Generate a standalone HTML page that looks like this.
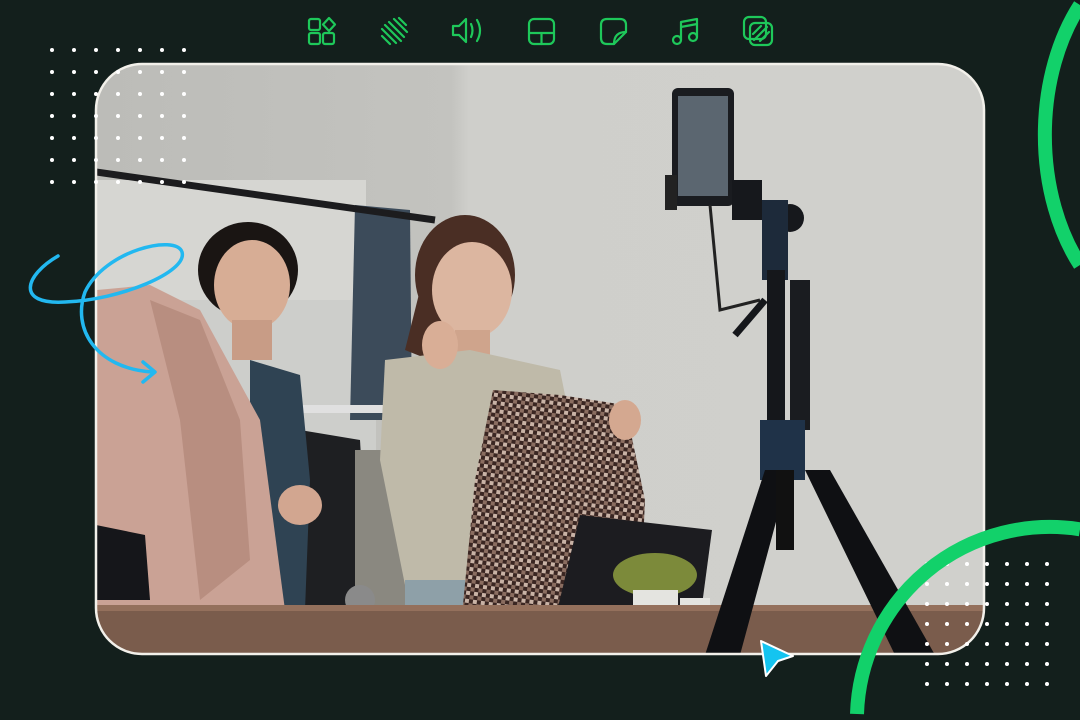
<!DOCTYPE html>
<html><head><meta charset="utf-8"><style>
html,body{margin:0;padding:0;background:#131f1c;width:1080px;height:720px;overflow:hidden}
svg{display:block;position:fixed;left:0;top:0;overflow:hidden}
</style></head><body>
<svg width="1080" height="720" viewBox="0 0 1080 720" overflow="hidden" xmlns="http://www.w3.org/2000/svg">
<defs>
<clipPath id="c"><rect x="96" y="64" width="888" height="590" rx="46"/></clipPath>
<pattern id="chk" width="8" height="8" patternUnits="userSpaceOnUse" patternTransform="rotate(8)">
<rect width="8" height="8" fill="#3a2622"/><rect width="4" height="4" fill="#c9b3a6"/><rect x="4" y="4" width="4" height="4" fill="#8a6d60"/></pattern>
<linearGradient id="wall" x1="0" x2="1"><stop offset="0" stop-color="#bcbcb8"/><stop offset="0.4" stop-color="#c3c3bf"/><stop offset="0.42" stop-color="#cfcfcb"/><stop offset="1" stop-color="#d0d0cc"/></linearGradient>
</defs>
<rect width="1080" height="720" fill="#131f1c"/>
<g clip-path="url(#c)">
<rect x="96" y="64" width="888" height="590" fill="url(#wall)"/>
<rect x="96" y="180" width="270" height="240" fill="#d6d6d2"/>
<rect x="96" y="300" width="280" height="150" fill="#cdcecb"/>
<polygon points="355,205 410,210 412,420 350,420" fill="#3c4b5a"/>
<line x1="96" y1="172" x2="435" y2="220" stroke="#1c1c1e" stroke-width="7"/>
<rect x="300" y="405" width="90" height="8" fill="#e0e0e0"/>
<polygon points="300,430 360,440 370,610 300,610" fill="#1e1f22"/>
<polygon points="355,450 410,450 410,610 355,610" fill="#8a8880"/>
<ellipse cx="248" cy="270" rx="50" ry="48" fill="#1a1513"/>
<ellipse cx="252" cy="285" rx="38" ry="45" fill="#d7ad95"/>
<rect x="232" y="320" width="40" height="40" fill="#c89c86"/>
<polygon points="250,360 300,375 310,480 305,610 250,610" fill="#2f4353"/>
<polygon points="97,290 150,285 200,310 260,420 285,610 97,610" fill="#caa295"/>
<polygon points="150,300 200,320 240,420 250,560 200,600 180,420" fill="#b88e80"/>
<ellipse cx="300" cy="505" rx="22" ry="20" fill="#d2a690"/>
<ellipse cx="465" cy="275" rx="50" ry="60" fill="#4a2e24"/>
<polygon points="420,290 440,300 430,360 405,350" fill="#4a2e24"/>
<ellipse cx="472" cy="290" rx="40" ry="48" fill="#dcb6a0"/>
<rect x="455" y="330" width="35" height="30" fill="#cfa48c"/>
<polygon points="385,360 470,350 560,370 570,420 560,610 410,610 380,460" fill="#bfbaa9"/>
<ellipse cx="440" cy="345" rx="18" ry="24" fill="#d9ae96"/>
<polygon points="405,580 465,580 465,615 405,615" fill="#8ea0a8"/>
<polygon points="493,390 560,395 625,405 645,500 640,610 462,615 475,480" fill="url(#chk)"/>
<ellipse cx="625" cy="420" rx="16" ry="20" fill="#d4a890"/>
<polygon points="580,515 712,530 700,620 555,620" fill="#1c1c20"/>
<ellipse cx="655" cy="575" rx="42" ry="22" fill="#7c8a3a"/>
<rect x="633" y="590" width="45" height="32" fill="#e4e4e0"/>
<rect x="680" y="598" width="30" height="26" fill="#e4e4e0"/>
<circle cx="360" cy="600" r="15" fill="#8a8a8a"/>
<polygon points="96,525 145,535 150,600 96,600" fill="#15161a"/>
<rect x="96" y="605" width="888" height="50" fill="#7a5c4c"/>
<rect x="96" y="605" width="888" height="6" fill="#94705c"/>
<rect x="672" y="88" width="62" height="118" rx="6" fill="#1a1c20"/>
<rect x="678" y="96" width="50" height="100" fill="#5b6670"/>
<rect x="665" y="175" width="12" height="35" fill="#222"/>
<rect x="732" y="180" width="30" height="40" fill="#16181c"/>
<circle cx="790" cy="218" r="14" fill="#16181c"/>
<rect x="762" y="200" width="26" height="80" fill="#1d2a3a"/>
<rect x="767" y="270" width="18" height="200" fill="#15171b"/>
<polyline points="710,205 720,310 760,300" stroke="#222" stroke-width="3" fill="none"/>
<line x1="765" y1="300" x2="735" y2="335" stroke="#15171b" stroke-width="7"/>
<rect x="790" y="280" width="20" height="150" fill="#1a1c20"/>
<rect x="760" y="420" width="45" height="60" fill="#1f3248"/>
<polygon points="765,470 790,470 740,655 705,655" fill="#0f1013"/>
<polygon points="805,470 830,470 935,655 895,655" fill="#0f1013"/>
<rect x="776" y="470" width="18" height="80" fill="#111"/>
</g>
<rect x="96" y="64" width="888" height="590" rx="46" fill="none" stroke="#f2f0ea" stroke-width="2.5"/>
<g fill="#fff">
<g id="dl">
<circle cx="52" cy="50" r="2"/><circle cx="74" cy="50" r="2"/><circle cx="96" cy="50" r="2"/><circle cx="118" cy="50" r="2"/><circle cx="140" cy="50" r="2"/><circle cx="162" cy="50" r="2"/><circle cx="184" cy="50" r="2"/>
</g>
<use href="#dl" y="22"/><use href="#dl" y="44"/><use href="#dl" y="66"/><use href="#dl" y="88"/><use href="#dl" y="110"/><use href="#dl" y="132"/>
<g id="dr">
<circle cx="927" cy="564" r="2"/><circle cx="947" cy="564" r="2"/><circle cx="967" cy="564" r="2"/><circle cx="987" cy="564" r="2"/><circle cx="1007" cy="564" r="2"/><circle cx="1027" cy="564" r="2"/><circle cx="1047" cy="564" r="2"/>
</g>
<use href="#dr" y="20"/><use href="#dr" y="40"/><use href="#dr" y="60"/><use href="#dr" y="80"/><use href="#dr" y="100"/><use href="#dr" y="120"/>
</g>
<path d="M857,714 A193,193 0 0 1 1080,529.3" fill="none" stroke="#12d16a" stroke-width="14"/>
<path d="M1080,5 A125,187 0 0 0 1080,265" fill="none" stroke="#12d16a" stroke-width="14"/>
<g fill="none" stroke="#22b8f0" stroke-width="3.5" stroke-linecap="round" stroke-linejoin="round">
<path d="M58,256 C25,275 15,305 65,302 C120,300 188,272 182,252 C176,234 105,250 85,292 C72,328 95,368 152,372"/>
<path d="M143,362 L155,372 L143,382"/>
</g>
<polygon points="761,641 793,656 778,661 766,676" fill="#14c4f0" stroke="#fff" stroke-width="2" stroke-linejoin="round"/>
<g fill="none" stroke="#1ec85a" stroke-width="2.2" stroke-linecap="round" stroke-linejoin="round">
<rect x="309" y="19" width="11" height="11" rx="2"/><rect x="309" y="33" width="11" height="11" rx="2"/><rect x="323" y="33" width="11" height="11" rx="2"/><path d="M329,18 L335,24.5 L329,31 L323,24.5 Z"/>
<path d="M382,36 L390,44 M382,29 L396,43 M385,25 L401,41 M389,22 L404,37 M394,19 L407,32 M399,18 L406,25"/>
<path d="M453,26 L459,26 L466,19 L466,42 L459,35 L453,35 Z"/><path d="M471,24 Q474,30.5 471,37"/><path d="M477,20 Q483,30.5 477,41"/>
<rect x="529" y="19" width="25" height="25" rx="5"/><path d="M529,33 L554,33 M541.5,33 L541.5,44"/>
<path d="M601,25 Q601,19 607,19 L620,19 Q626,19 626,25 L626,32 L614,44 L607,44 Q601,44 601,38 Z"/><path d="M626,32 Q614,32 614,44"/>
<circle cx="677" cy="40" r="4"/><circle cx="693" cy="37" r="4"/><path d="M681,40 L681,22 L697,19 L697,37 M681,27 L697,24"/>
<rect x="744" y="17" width="22" height="22" rx="5"/><rect x="750" y="23" width="22" height="22" rx="5"/><path d="M753,34 L761,26 M754,40 L767,27 M760,41 L769,32"/>
</g>
</svg>
</body></html>
